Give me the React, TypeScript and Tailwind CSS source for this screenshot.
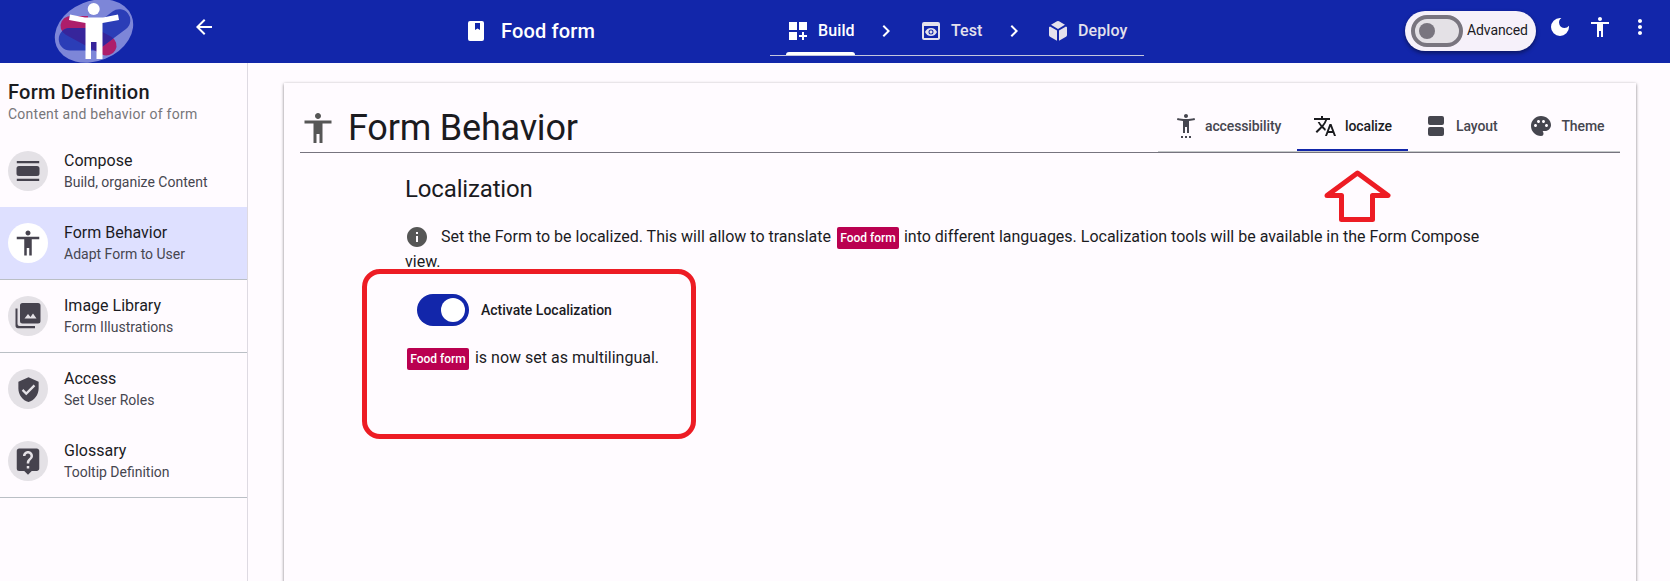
import React from "react";
import { MdAccessibility, MdArrowBack, MdChevronRight, MdDashboardCustomize, MdInfo, MdMoreVert, MdPalette, MdPreview, MdSettingsAccessibility, MdTranslate, MdVerifiedUser, MdLiveHelp, MdDarkMode } from "react-icons/md";

type IconProps = { className?: string };

const Svg = ({ className, d, box = "0 0 24 24" }: IconProps & { d: string; box?: string }) => (
  <svg viewBox={box} className={className} fill="currentColor"><path fillRule="evenodd" d={d} /></svg>
);
const BookIcon = (p: IconProps) => <Svg {...p} box="0 0 16 20" d="M2 0h12q2 0 2 2v16q0 2-2 2H2q-2 0-2-2V2Q0 0 2 0zM7 2v7l2.500-1.500L12 9V2z" />;
const DayIcon = (p: IconProps) => <Svg {...p} box="0 0 24 24" d="M.8 2h22.400v2.200H.8zM.8 19.800h22.400V22H.8zM3 7h18q2.500 0 2.500 2.500v5q0 2.500-2.500 2.500H3Q.5 17 .5 14.500v-5Q.5 7 3 7z" />;
const CubeIcon = (p: IconProps) => <Svg {...p} box="0 0 18 20" d="M8 .3q1-.5 2 0l6 3.400L9 7.900 2 3.700zM1 5.500l7 4.100v10.100l-7-4q-1-.6-1-1.700V6.200zM17 5.500l-7 4.100v10.100l7-4q1-.6 1-1.700V6.200z" />;
const RowsIcon = (p: IconProps) => <Svg {...p} box="0 0 16 20" d="M2 0h12q2 0 2 2v5q0 2-2 2H2Q0 9 0 7V2Q0 0 2 0zM2 11h12q2 0 2 2v5q0 2-2 2H2q-2 0-2-2v-5q0-2 2-2z" />;
const ImagesIcon = (p: IconProps) => <Svg {...p} box="0 0 26 26" d="M7.500 0h15.500q2.500 0 2.500 2.500V18q0 2.500-2.500 2.500H7.500Q5 20.500 5 18V2.500Q5 0 7.500 0zM9.500 15.500h12l-3.500-5-2.500 3.500-2.500-3zM.5 5.500h2V21q0 2 2 2H20v2.200H3Q.5 25.200.5 22.500z" />;

const Logo = () => (
  <svg viewBox="0 0 80 63" className="ml-[54px] h-[63px] w-[80px] shrink-0">
    <defs>
      <clipPath id="ribbonOverlap">
        <path d="M16 28H37L58.500 11.500A11 11 0 0 1 72 29L43 50.500H16A11 11 0 0 1 16 28z" />
      </clipPath>
    </defs>
    <ellipse cx="40" cy="31" rx="40.500" ry="30" transform="rotate(-22 40 31)" fill="#7d86d8" />
    <path d="M16.500 26L52.500 45.500" stroke="#ad1e6b" strokeWidth="20" strokeLinecap="round" />
    <path d="M16.500 16H34V28H16.500z" fill="#ad1e6b" />
    <path d="M16 28H37L58.500 11.500A11 11 0 0 1 72 29L43 50.500H16A11 11 0 0 1 16 28z" fill="#2b3db7" />
    <path d="M16.500 26L52.500 45.500" stroke="#37259b" strokeWidth="20" strokeLinecap="round" clipPath="url(#ribbonOverlap)" />
    <circle cx="39.700" cy="9" r="6" fill="#fff" />
    <path d="M16 14.500L31 17.500H49L64 14.500L65 20L48.500 23V59H42.500V42H37V59H31.500V23L15 20z" fill="#fff" />
  </svg>
);

const sidebar = [
  { title: "Compose", sub: "Build, organize Content", Icon: DayIcon, row: "h-[72px]", size: "size-6" },
  { title: "Form Behavior", sub: "Adapt Form to User", Icon: MdAccessibility, row: "h-[73px] bg-[#dee0ff] border-b", circle: "bg-white", size: "size-[30px]" },
  { title: "Image Library", sub: "Form Illustrations", Icon: ImagesIcon, row: "h-[73px] border-b", size: "size-[26px]" },
  { title: "Access", sub: "Set User Roles", Icon: MdVerifiedUser, row: "h-[72px]", size: "size-[27px]" },
  { title: "Glossary", sub: "Tooltip Definition", Icon: MdLiveHelp, row: "h-[73px] border-b", size: "size-[30px]" },
];

const Tag = ({ className = "" }: IconProps) => (
  <span className={"inline-flex h-[22px] w-[62px] items-center justify-center rounded-[2px] bg-[#ba0050] align-middle text-[12px] font-medium leading-none text-white " + className}>Food form</span>
);

export default function App() {
  return (
    <div className="relative flex h-[581px] w-[1670px] flex-col overflow-hidden bg-[#fffbff] font-['Roboto',sans-serif] text-[#1b1b1f]">
      <header className="flex h-[63px] shrink-0 bg-[#1226aa] text-white">
        <Logo />
        <MdArrowBack className="ml-[58px] mt-[15px] size-6" />
        <div className="ml-[252px] flex h-[62px] w-[302px] items-center">
          <BookIcon className="h-5 w-4" />
          <span className="ml-[17px] text-[20px] font-medium tracking-[0.15px]">Food form</span>
        </div>
        <nav className="flex h-[56px] w-[374px] border-b border-[#c4c6dd] text-[16px] font-medium tracking-[0.1px]">
          <div className="ml-4 flex w-[69px] flex-col">
            <div className="flex h-[52px] items-center pt-[10px]">
              <MdDashboardCustomize className="size-6 shrink-0" /><span className="ml-2 text-white">Build</span>
            </div>
            <div className="h-[3px] rounded-t-[3px] bg-white" />
          </div>
          <div className="flex h-[62px] items-center">
            <MdChevronRight className="ml-[19px] size-6" />
            <MdPreview className="ml-[21px] size-6 text-[#e4e1ec]" /><span className="ml-2 w-[32px] text-[#e4e1ec]">Test</span>
            <MdChevronRight className="ml-[19px] size-6" />
            <CubeIcon className="ml-[23px] h-5 w-[18px] text-[#e4e1ec]" /><span className="ml-[11px] text-[#e4e1ec]">Deploy</span>
          </div>
        </nav>
        <div className="ml-[261px] mt-[11px] flex h-10 w-[131px] items-center rounded-full bg-[#f6f1fa] pl-[6px] shadow-[0_2px_4px_rgba(0,0,0,.45)]">
          <div className="flex h-8 w-[52px] items-center rounded-full border-4 border-[#79757f] bg-[#e4e1e6] pl-1">
            <div className="size-4 rounded-full bg-[#79757f]" />
          </div>
          <span className="-mt-0.5 ml-1 text-[14px] leading-5 tracking-[-0.1px] text-[#1b1b1f]">Advanced</span>
        </div>
        <MdDarkMode className="ml-3 mt-[15px] size-6" />
        <MdAccessibility className="ml-4 mt-[15px] size-6" />
        <MdMoreVert className="ml-4 mt-[15px] size-6" />
      </header>
      <div className="flex min-h-0 flex-1">
        <aside className="w-[248px] shrink-0 border-r border-[#dedae2]">
          <div className="h-[72px] pl-2 pt-[17px]">
            <h2 className="text-[20px] font-medium leading-6 tracking-[0.25px]">Form Definition</h2>
            <p className="text-[14px] leading-5 tracking-[0.25px] text-[#77767a]">Content and behavior of form</p>
          </div>
          {sidebar.map(({ title, sub, Icon, row, circle, size }) => (
            <div key={title} className={"flex items-center border-[#babfc5] pl-2 " + row}>
              <div className={"flex size-10 items-center justify-center rounded-full text-[#46434e] " + (circle || "bg-[#e4e1e6]")}><Icon className={size} /></div>
              <div className="ml-4">
                <div className="text-[16px] leading-6">{title}</div>
                <div className="-mt-px mb-px text-[14px] leading-5 text-[#46464f]">{sub}</div>
              </div>
            </div>
          ))}
        </aside>
        <main className="flex-1 pl-[36px] pr-[34px] pt-5">
          <section className="h-[520px] bg-[#fffbff] px-4 shadow-[0_1px_3px_rgba(0,0,0,.5)]">
            <div className="flex h-[70px] border-b border-[#77747f]">
              <MdAccessibility className="mt-[27px] size-9 text-[#565656]" />
              <h1 className="ml-3 mt-[23px] text-[36px] leading-[44px] tracking-[-0.2px]">Form Behavior</h1>
              <nav className="ml-auto flex h-[69px] w-[462px] border-b border-[#c5c9ca] text-[14px] font-medium tracking-[-0.12px] text-[#46464f]">
                <div className="flex h-full w-[139px] items-center pl-4 pt-[18px]"><MdSettingsAccessibility className="size-6" /><span className="ml-[7px]">accessibility</span></div>
                <div className="flex h-full w-[111px] items-center border-b-2 border-[#1226aa] pl-4 pt-[20px] text-[#1b1b1f]"><MdTranslate className="size-6" /><span className="ml-2">localize</span></div>
                <div className="flex h-full items-center pl-5 pt-[18px]"><RowsIcon className="h-5 w-4" /><span className="ml-3">Layout</span></div>
                <div className="flex h-full items-center pl-8 pt-[18px]"><MdPalette className="size-6" /><span className="ml-2">Theme</span></div>
              </nav>
            </div>
            <div className="pl-[105px] pt-[20px]">
              <h2 className="text-[24px] leading-8 tracking-[-0.15px]">Localization</h2>
              <div className="mt-[19px] w-[1090px] text-[16px] leading-[25px]">
                <MdInfo className="mr-[12px] inline size-6 align-[-7px] text-[#565656]" />
                Set the Form to be localized. This will allow to translate <Tag className="ml-[2px] mr-px" /> into different languages. Localization tools will be available in the Form Compose view.
              </div>
              <div className="ml-3 mt-5 flex h-8 items-center">
                <div className="flex h-8 w-[52px] items-center justify-end rounded-full bg-[#1226aa] pr-1"><div className="size-6 rounded-full bg-white" /></div>
                <span className="ml-3 text-[14px] font-medium">Activate Localization</span>
              </div>
              <div className="mt-5 text-[16px] leading-6"><Tag className="ml-[2px] mr-[2px]" /> is now set as multilingual.</div>
            </div>
          </section>
        </main>
      </div>
      <div className="pointer-events-none absolute left-[362px] top-[269px] h-[170px] w-[334px] rounded-[18px] border-[5px] border-[#ed1c24]" />
      <svg className="pointer-events-none absolute left-[1323px] top-[169px] h-[54px] w-[70px]" viewBox="0 0 70 54" fill="none" stroke="#ed1c24" strokeWidth="5" strokeLinejoin="round">
        <path d="M34.500 4L65 26.500H49.500V50.500H18.500V26.500H4Z" />
      </svg>
    </div>
  );
}
